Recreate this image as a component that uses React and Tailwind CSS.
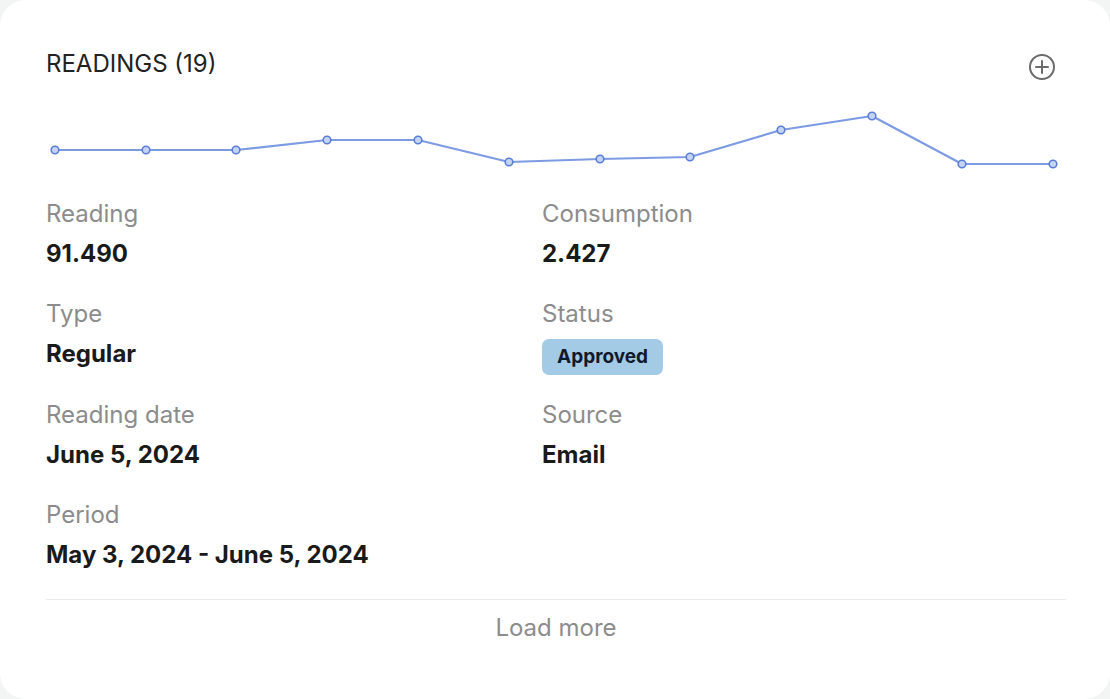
import React from 'react'

const points = [
  [55, 150], [146, 150], [236, 150], [327, 140], [418, 140], [509, 162],
  [600, 159], [690, 157], [781, 130], [872, 116], [962, 164], [1053, 164],
]

const Field = ({ label, children }) => (
  <div className="flex flex-col">
    <p className="text-[24px] leading-[30px] text-[#8c8c8c]">{label}</p>
    <div className="mt-[10px] text-[24px] leading-[30px] font-bold text-[#1a1a1a]">{children}</div>
  </div>
)

const Sparkline = () => {
  // chart sits at x=46, y=100 in the page
  const pts = points.map(([x, y]) => [x - 46, y - 100])
  return (
    <svg width="1020" height="80" viewBox="0 0 1020 80" className="block">
      <polyline
        points={pts.map((p) => p.join(',')).join(' ')}
        fill="none"
        stroke="#7d9be3"
        strokeWidth="2.2"
        strokeLinejoin="round"
      />
      {pts.map(([x, y], i) => (
        <circle key={i} cx={x} cy={y} r="3.8" fill="#c6d4f4" stroke="#5a7ed6" strokeWidth="1.6" />
      ))}
    </svg>
  )
}

export default function App() {
  return (
    <div className="w-[1110px] h-[699px] bg-[#f3f4f4] overflow-hidden" style={{ fontFamily: 'Inter, "Noto Sans", sans-serif' }}>
      <div className="h-full bg-white rounded-[26px] pl-[46px] pr-[44px] pt-[49px]">
        <div className="flex h-[30px] items-start justify-between">
          <h2 className="text-[24px] leading-[30px] text-[#222]">READINGS (19)</h2>
          <svg width="28" height="28" viewBox="0 0 28 28" className="mt-[4px] mr-[10px] shrink-0">
            <circle cx="14" cy="14" r="12" fill="none" stroke="#6b6b6b" strokeWidth="2" />
            <path d="M14 8v12M8 14h12" stroke="#6b6b6b" strokeWidth="2" strokeLinecap="round" />
          </svg>
        </div>
        <div className="mt-[21px]">
          <Sparkline />
        </div>
        <div className="grid grid-cols-[496px_1fr] gap-y-[30px] mt-[19px]">
          <Field label="Reading">91.490</Field>
          <Field label="Consumption">2.427</Field>
          <Field label="Type">Regular</Field>
          <Field label="Status">
            <span className="inline-flex items-center h-[36px] px-[15px] mb-[-5px] rounded-[7px] bg-[#a4cbe5] text-[19px] font-bold text-[#111a2c]">
              Approved
            </span>
          </Field>
          <Field label="Reading date">June 5, 2024</Field>
          <Field label="Source">Email</Field>
          <Field label="Period">May 3, 2024 - June 5, 2024</Field>
        </div>
        <div className="mt-[29px] border-t border-[#ececec] pt-[13px] text-center">
          <button className="text-[24px] leading-[30px] text-[#8c8c8c]">Load more</button>
        </div>
      </div>
    </div>
  )
}
